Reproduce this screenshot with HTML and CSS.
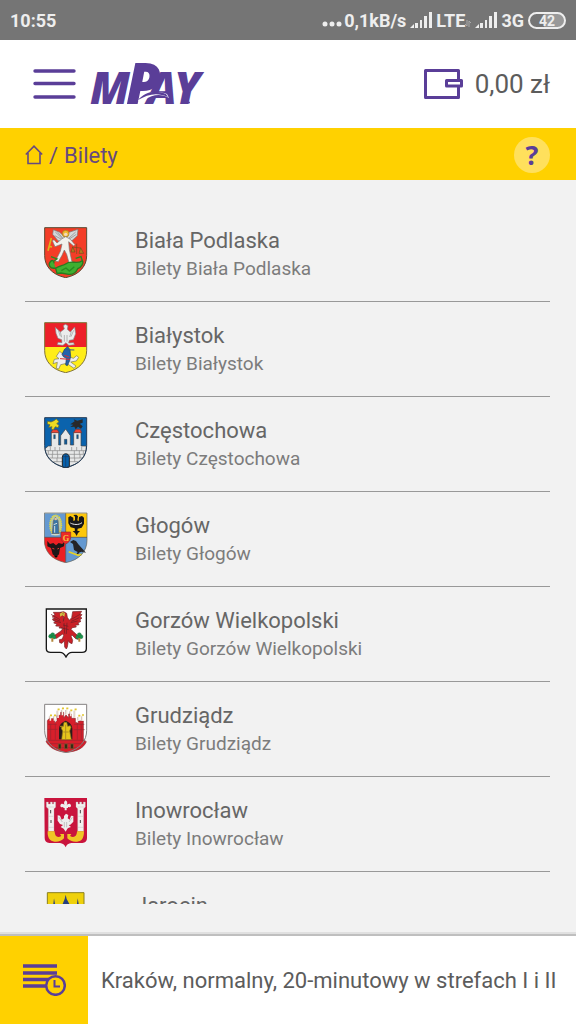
FILE: index.html
```html
<!DOCTYPE html>
<html lang="pl">
<head>
  <meta charset="UTF-8" />
  <meta name="viewport" content="width=device-width, initial-scale=1.0"/>
  <title>mPay - Bilety</title>
  <link rel="stylesheet" href="styles.css">
</head>
<body>

  <!-- Status bar -->
  <div class="status-bar">
    <span>10:55</span>
    <div class="status-info">
      <svg class="dots" width="20" height="6" viewBox="0 0 20 6" fill="#eee"><circle cx="3" cy="3" r="2.5"/><circle cx="10" cy="3" r="2.5"/><circle cx="17" cy="3" r="2.5"/></svg>
      <span>0,1kB/s</span>
      <svg class="signal" width="22" height="16" viewBox="0 0 22 16" fill="#eee"><path d="M0 16l4-4v4zM5 11h3v5H5zM10 8h2v8h-2zM14 4h3v12h-3zM19 0h3v16h-3z"/></svg>
      <span>LTE</span>
      <svg class="arrows" width="6" height="7" viewBox="0 0 6 7" fill="none" stroke="#aaa"><path d="M2 0v6L0 4M4 7V1l2 2"/></svg>
      <svg class="signal" width="22" height="16" viewBox="0 0 22 16" fill="#eee"><path d="M0 16l4-4v4zM5 11h3v5H5zM10 8h2v8h-2zM14 4h3v12h-3zM19 0h3v16h-3z"/></svg>
      <span>3G</span>
      <span class="battery">42</span>
    </div>
  </div>

  <!-- Header -->
  <header class="header">
    <button class="icon-btn" aria-label="Menu">
      <svg width="43" height="30" viewBox="0 0 43 30" stroke="#5a3e98" stroke-width="3.4" stroke-linecap="round"><path d="M2 2h39M2 14.500h39M2 28h39"/></svg>
    </button>
    <a href="#" class="logo" aria-label="mPay">
      <svg width="120" height="44" viewBox="0 0 120 44">
        <text class="logo-text" y="42" font-size="44"><tspan x="0">M</tspan><tspan x="36" font-size="56">P</tspan><tspan x="57">A</tspan><tspan x="84">Y</tspan></text>
        <path d="M48 39c5-7 15-12 29-7l2 4c-9-5-17-3-24 2z" fill="#fff"/>
        <path d="M48 38c6-7 16-11 28-6l2 3c-11-5-20-3-30 3z" fill="#5a3e98"/>
        <circle cx="99" cy="40.500" r="1" fill="#5a3e98"/>
      </svg>
    </a>
    <button class="wallet">
      <svg width="39" height="30" viewBox="0 0 39 30" fill="none" stroke="#5a3e98" stroke-width="3" stroke-linejoin="round"><path d="M34.500 11.500V1.500h-33v27h33V17"/><path d="M22.500 11.500h15v5.500h-15z"/></svg>
      <span>0,00 zł</span>
    </button>
  </header>

  <!-- Breadcrumb -->
  <nav class="breadcrumb">
    <a href="#" aria-label="Start"><svg width="18" height="20" viewBox="0 0 18 20" fill="none" stroke="#66497f" stroke-width="1.600"><path d="M.8 9.500L9 1.200l8.200 8.300M3 8v10.500h12V8"/></svg></a>
    <span>/</span>
    <a href="#">Bilety</a>
    <button class="help-btn">?</button>
  </nav>

  <!-- City list -->
  <main class="city-list">
    <a href="#" class="city">
      <svg class="crest" viewBox="41 36 132 153">
        <path d="M43 38h126v84c0 30-20 57-63 66c-43-9-63-36-63-66z" fill="#f43d27" stroke="#5b4a32" stroke-width="3"/>
        <path d="M100 82L83 77L67 58L69 44L88 52L102 65L116 52L143 43L141 62L126 76L112 80z" fill="#d5d8da" stroke="#777" stroke-width="2"/>
        <path d="M75 51l20 19M82 52l17 19M136 51l-20 18M138 58l-24 16M73 62l21 11" stroke="#858585" stroke-width="2"/>
        <circle cx="106" cy="56" r="10" fill="#f3ba32" stroke="#9b7626" stroke-width="2"/><circle cx="106" cy="58" r="5" fill="#f4d9bb"/>
        <path d="M94 72l12-7l14 8l14 16l-4 4l-15-13l2 23l7 34l5 8l-12 2l-8-29l-7-13l-7 16l-11 19l-9-2l15-29l5-22l-21 8l-8-18l5-3l9 10z" fill="#f2f2ed" stroke="#777" stroke-width="2"/>
        <path d="M53 107L63 69M57 94l8 2" stroke="#ddb51c" stroke-width="5"/>
        <path d="M125 96l25 3M139 86v31M127 96l-5 15h12zM151 98l-5 17h14z" fill="#b8791f" stroke="#72501c" stroke-width="2"/>
        <path d="M76 159c-18 4-24-11-15-20c5-5 11-2 10 6M76 160c12-9 22-7 31-14c16-12 31 4 49-9c5 7-3 20-14 24c-4 9-14 18-27 17l-23-4l-12 1z" fill="#3faf31" stroke="#287b20" stroke-width="4"/>
        <path d="M62 125l18 7l-10 6M136 130l16-5l4 13M93 167l14-8l10 9l15-13" fill="none" stroke="#288b21" stroke-width="4"/>
      </svg>
      <div class="city-text"><h2>Biała Podlaska</h2><p>Bilety Biała Podlaska</p></div>
    </a>
    <a href="#" class="city">
      <svg class="crest" viewBox="41 36 132 153">
        <path d="M43 38h126v84c0 30-20 57-63 66c-43-9-63-36-63-66z" fill="#ffed19"/>
        <path d="M43 38h126v73H43z" fill="#ed2028"/>
        <path d="M43 38h126v84c0 30-20 57-63 66c-43-9-63-36-63-66z" fill="none" stroke="#80723e" stroke-width="3"/>
        <path d="M102 57l-3-10l6-4l8 4l-2 11l9 8l13-15l3 20l-7 18l-12 2l-2 8l15-1l2 6l-17 2l-8-8l-9 8l-17-2l2-7l12 1l-1-9l-11-4l-6-15l-2-18l15 14z" fill="#eceded" stroke="#858585" stroke-width="2"/>
        <path d="M84 61l6 18M90 66l4 16M130 61l-8 19M123 65l-5 16M102 75v20M110 75v20" stroke="#969696" stroke-width="2"/>
        <path d="M78 139l10-15l12 10l29 11l10-8l6 5l-7 11l-17 3l16 12l-6 7l-22-15l-18 4l-6 13l-7-2l3-18l-13 4l4-13l14-2z" fill="#eee" stroke="#77755b" stroke-width="2"/>
        <path d="M95 133l8-16l9-7l7 9l2 20l-3 13l-7 15l-5-2l2-20l-9-5z" fill="#2362ab" stroke="#1e3f66" stroke-width="2"/><path d="M105 119l27 1" stroke="#315d83" stroke-width="3"/><path d="M89 146l30 2M102 136l15 5" stroke="#d92b31" stroke-width="3"/>
      </svg>
      <div class="city-text"><h2>Białystok</h2><p>Bilety Białystok</p></div>
    </a>
    <a href="#" class="city">
      <svg class="crest" viewBox="41 36 132 153">
        <path d="M43 38h126v84c0 30-20 57-63 66c-43-9-63-36-63-66z" fill="#0b63ad"/>
        <path d="M44 131l10-8h9V82h22v38h6V92l15-20l14 20v28h10V82h22v41h16c0 34-19 55-62 64c-36-8-60-27-62-56z" fill="#e7e8e8" stroke="#444" stroke-width="2"/>
        <path d="M46 137h121M49 148h114M56 159h99M68 170h75M60 126v11M74 126v11M88 126v11M124 126v11M139 126v11M154 126v11M54 137v11M67 137v11M81 137v11M132 137v11M147 137v11M159 137v11M66 148v11M82 148v11M132 148v11M149 148v11M80 159v11M133 159v11" stroke="#858585" stroke-width="2"/>
        <path d="M62 83l5-9h14l5 9zM130 83l6-10h14l4 10z" fill="#f04435" stroke="#713b37" stroke-width="2"/>
        <path d="M70 89h5v12h-5zM139 89h5v12h-5zM102 103h8v15h-8z" fill="#145a94" stroke="#333"/>
        <path d="M96 186v-29c0-14 21-14 21 0v29l-11 2z" fill="#0560ab" stroke="#222" stroke-width="3"/><path d="M97 155h19M106 150v36" stroke="#193a60" stroke-width="2"/>
        <path d="M52 49l10 2l9-4l7-5l8 8l-7 6l7 5l-3 7l-8-3l-6 9l-6-2l2-7l-10 2l4-8l-8-2z" fill="#eddb22" stroke="#746b20" stroke-width="2"/>
        <path d="M120 58l13-9l-3-6l11 4l16-4v10l-9 3l9 8l-5 7l-9-6l-7 8l-4-8l-12 1l9-7z" fill="#29292b"/>
        <path d="M43 38h126v84c0 30-20 57-63 66c-43-9-63-36-63-66z" fill="none" stroke="#253d58" stroke-width="3"/>
      </svg>
      <div class="city-text"><h2>Częstochowa</h2><p>Bilety Częstochowa</p></div>
    </a>
    <a href="#" class="city">
      <svg class="crest" viewBox="41 36 132 153">
        <path d="M42 40h64v72H42z" fill="#6499d1"/><path d="M106 40h64v72h-64z" fill="#fdc70c"/>
        <path d="M42 112h64v76c-44-8-64-35-64-67z" fill="#ec2024"/><path d="M106 112h64v10c0 31-21 58-64 66z" fill="#6499d1"/>
        <ellipse cx="76" cy="75" rx="17" ry="29" fill="#b3c8ac" stroke="#e6d93a" stroke-width="5" stroke-dasharray="4 2"/>
        <path d="M69 63l6-11l8 10l3 39H66z" fill="#3975a6" stroke="#665e61" stroke-width="2"/><circle cx="76" cy="57" r="4" fill="#ddc5a3"/><path d="M70 74l10-4M73 78v20M63 104h25" stroke="#d5dfdf" stroke-width="3"/>
        <path d="M134 50l-5-5l9-1l5 5l-2 12l4 3l1-13l9-3l6 5v18l-7 12l-12 3l-1 6l8 2l-6 5l-4 9l-5-9l-7-5l7-2l-1-7l-12-3l-7-12V52l6-4l9 5v10l5-2z" fill="#171719"/><path d="M120 69c8 5 26 7 35-1" fill="none" stroke="#eee" stroke-width="3"/>
        <path d="M51 123l8 9l10-3l8 7l8-7l11 3l7-10l-2 17l-12 5l-3 19l-9 9l-10-9l-5-19l-11-5z" fill="#1d1718"/><path d="M66 145l6 2M81 147l5-2" stroke="#e13c34" stroke-width="3"/><path d="M70 168l7 7l7-7" stroke="#e13c34" stroke-width="2"/>
        <path d="M119 126l10-6l8 3l7 10l23 25l-13-3l-6 2l-7 8l-3-2l4-7l-11-6l-3-18z" fill="#222327"/><path d="M115 155l16 6l13 5l10-3" fill="none" stroke="#e8d225" stroke-width="5"/>
        <path d="M92 96h29v16c0 9-6 16-15 20c-9-4-14-11-14-20z" fill="#ee2927" stroke="#8d3028" stroke-width="2"/>
        <text class="crest-letter" x="97" y="122">G</text>
        <path d="M42 39h128v82c0 32-22 59-64 67c-43-9-64-35-64-67z" fill="none" stroke="#666455" stroke-width="2"/><path d="M106 40v56M43 112h49M121 112h49M106 132v55" stroke="#444" stroke-width="2"/>
      </svg>
      <div class="city-text"><h2>Głogów</h2><p>Bilety Głogów</p></div>
    </a>
    <a href="#" class="city">
      <svg class="crest" viewBox="41 36 132 153">
        <path d="M48 42h120v119q0 11-13 11h-30q-11 0-18 14q-7-14-18-14H61q-13 0-13-11z" fill="#fff" stroke="#181818" stroke-width="4"/>
        <path d="M99 79l2-12l-5-6l-8-2l3-7l9-2l9 5l2 12l6 9l7-8l3-18l27-1l-5 8l6 2l-6 7l6 3l-7 6l4 4l-9 5l3 5l-11 2l3 5l-12 2l-4 5l9 9l17 15l-4 6l-8-2l-11-11l-3 3l5 13l-2 10l-7-3l-4-6l-3 19l-3 6l-5-6l-1-19l-7 8l-7-2l-1-9l9-2l4-11l-3-4l-18 13l-8-2l2-7l19-13l6-8l-12-1l3-5l-13-1l4-6l-10-3l5-5l-9-5l7-4l-7-7l8-3l-5-8h29l2 19z" fill="#ca2027" stroke="#742428" stroke-width="2"/>
        <path d="M62 58l27 16M65 68l25 11M69 77l23 6M149 58l-26 15M147 68l-24 11M142 78l-21 5M101 84l2 32M110 83l-2 34M92 98l23 6M98 90l16 4" stroke="#6b2026" stroke-width="2"/>
        <path d="M88 56l9-5l7 4l-2 10l-6-4l-6 4z" fill="#d7bf43"/><circle cx="98" cy="56" r="1.500" fill="#333"/>
        <g fill="#19944c" stroke="#235c34"><circle cx="61" cy="124" r="6"/><circle cx="67" cy="119" r="6"/><circle cx="71" cy="126" r="6"/><circle cx="142" cy="126" r="6"/><circle cx="147" cy="119" r="6"/><circle cx="152" cy="125" r="6"/></g><path d="M66 129v11M147 129v11" stroke="#b4883c" stroke-width="6"/>
      </svg>
      <div class="city-text"><h2>Gorzów Wielkopolski</h2><p>Bilety Gorzów Wielkopolski</p></div>
    </a>
    <a href="#" class="city">
      <svg class="crest" viewBox="41 36 132 153">
        <path d="M43 42h126v79c0 30-19 57-62 67c-44-10-64-37-64-67z" fill="#fff"/>
        <path d="M51 151V92l5-6h17v13l7-7V76h11v-9h9v17l7-9l8 9V72h8v13h12v12l9 3V93h15v58l9 4c-8 18-24 29-61 32c-31-3-51-15-60-33z" fill="#d71f2b" stroke="#902b30" stroke-width="2"/>
        <path d="M86 148v-31c0-12 8-20 20-25c12 5 20 13 20 25v31z" fill="#2a1b19"/>
        <path d="M94 149l3-26l-5-10l7-4l2-12h8l3 12l8-2l2 5l-4 11l5 26z" fill="#e6c61c" stroke="#8b741e" stroke-width="2"/><path d="M89 109h10M106 104v43M99 126h16" stroke="#b08f20" stroke-width="3"/>
        <path d="M60 92V75M72 92V75M83 84V56M96 76V54M109 75V54M121 79V59M134 84V56M145 92V76M156 92V74" stroke="#f8f0e4" stroke-width="5"/>
        <path d="M57 91V79M69 91V79M80 83V62M93 75V60M106 74V60M118 78V64M131 83V62M142 91V81M153 91V79" stroke="#6d4b41" stroke-width="1"/>
        <path d="M59 76h6M71 76h6M82 58h6M95 55h6M108 55h6M120 61h6M133 58h6M144 77h6M155 75h6" stroke="#e2c732" stroke-width="5"/>
        <path d="M53 103h26M52 118h29M131 103h31M130 119h33M49 151h116M54 161h105M64 173h85M61 101v48M75 101v48M141 101v48M153 101v48" stroke="#992531" stroke-width="2"/>
        <path d="M84 162h8v14h-8zM103 162h8v14h-8zM121 162h8v14h-8z" fill="#302317" stroke="#77662b" stroke-width="2"/>
        <path d="M43 43h126v78c0 30-19 57-62 67c-44-10-64-37-64-67z" fill="none" stroke="#858282" stroke-width="3"/>
      </svg>
      <div class="city-text"><h2>Grudziądz</h2><p>Bilety Grudziądz</p></div>
    </a>
    <a href="#" class="city">
      <svg class="crest" viewBox="41 36 132 153">
        <path d="M42 39h128v120q0 14-14 15h-33q-13 1-17 13q-5-12-17-13H57q-14-1-14-15z" fill="#c9143d"/>
        <path d="M48 51h6v6h6v-6h6v6h4v-6h6v16l-5 4v68H54V71l-6-5zM137 51h6v6h5v-6h6v6h5v-6h6v15l-5 5v68h-18V71l-5-5z" fill="#f3f1ef" stroke="#aaa" stroke-width="1"/>
        <path d="M61 75v10M150 75v10M62 105v9M150 105v9" stroke="#444" stroke-width="3"/><path d="M52 66h20M141 66h20M55 94h14M144 94h14M54 127h16M143 127h16" stroke="#aaa" stroke-width="1"/>
        <path d="M52 139h21c0 14 8 22 20 14l-4-6h12v13c-11 12-30 14-42 4q-8-7-7-25zM161 139h-21c0 14-9 22-21 14l4-6h-12v13c11 12 31 14 43 4q7-7 7-25z" fill="#efc625"/>
        <path d="M101 93l6-7l7 4l-2 10l6 4l4-12l7 1v17l-9 9l-5 1l7 6l-7 2l-4 3l-5 9l-6-9l-9-5l7-6l-9-3l-7-10V91l7 1l5 12l7-4z" fill="#eee"/><path d="M86 97l10 14M126 97l-10 14M102 111v16M109 111v16" stroke="#aaa" stroke-width="2"/>
        <path d="M106 46c7 5 5 12 2 17c3-8 13-9 14-1c0 5-7 5-9 4v3h-4v7h-6v-7h-4v-3c-3 1-9 1-9-4c1-8 11-7 14 1c-3-5-5-12 2-17z" fill="#eee"/>
      </svg>
      <div class="city-text"><h2>Inowrocław</h2><p>Bilety Inowrocław</p></div>
    </a>
    <a href="#" class="city">
      <svg class="crest" viewBox="41 36 132 153">
        <path d="M51 38h110v84c0 30-18 50-55 62c-37-12-55-32-55-62z" fill="#efd10b" stroke="#8b801e" stroke-width="3"/>
        <path d="M106 44l3 13l12 22v65H94V79l9-22zM71 55l3 16l9 14v59H62V85l7-14zM142 55l3 16l8 14v59h-22V85l9-14z" fill="#274080"/>
      </svg>
      <div class="city-text"><h2>Jarocin</h2><p>Bilety Jarocin</p></div>
    </a>
  </main>

  <!-- Last ticket -->
  <footer class="last-ticket">
    <button class="history-btn" aria-label="Historia">
      <svg width="43" height="32" viewBox="0 0 43 32" fill="none" stroke="#5a3e98"><path d="M0 2h34M0 9h34M0 15.500h26M0 22h23" stroke-width="3.400"/><circle cx="32.500" cy="21.500" r="9.300" fill="#ffd100" stroke-width="2.500"/><path d="M31.500 16v6.500H37" stroke-width="2"/></svg>
    </button>
    <a href="#">Kraków, normalny, 20-minutowy w strefach I i II</a>
  </footer>

</body>
</html>
```

FILE: styles.css
```css
* {
  box-sizing: border-box;
}

body {
  font-family: Roboto, Arial, sans-serif;
  margin: 0;
  height: 100vh;
  background-color: #f2f2f2;
  display: flex;
  flex-direction: column;
  overflow: hidden;
}

a {
  color: inherit;
  text-decoration: none;
}

button {
  font-family: inherit;
  border: none;
  padding: 0;
  background: none;
  cursor: pointer;
}

svg {
  display: block;
  flex-shrink: 0;
}

/* Status bar */
.status-bar {
  display: flex;
  justify-content: space-between;
  align-items: center;
  height: 40px;
  flex-shrink: 0;
  padding: 0 10px;
  background-color: #757575;
  color: #eee;
  font-size: 18px;
  font-weight: bold;
}

.status-info {
  display: flex;
  align-items: center;
  gap: 4px;
}

.dots {
  margin-top: 8px;
  margin-right: -2px;
}

.arrows {
  margin-top: 6px;
  margin-left: -4px;
}

.battery {
  width: 38px;
  height: 17px;
  border: 2px solid #eee;
  border-radius: 9px;
  background: linear-gradient(to right, #757575 14px, #999 14px);
  font-size: 14px;
  line-height: 14px;
  text-align: center;
}

/* Header */
.header {
  display: flex;
  align-items: center;
  height: 88px;
  flex-shrink: 0;
  padding: 0 26px 0 33px;
  background-color: #fff;
}

.logo {
  margin-left: 14px;
}

.logo-text {
  font-family: "Open Sans", sans-serif;
  font-weight: 800;
  font-style: italic;
  fill: #5a3e98;
}

.wallet {
  display: flex;
  align-items: center;
  gap: 12px;
  margin-left: auto;
  color: #5c5c5c;
  font-size: 26px;
}

/* Breadcrumb */
.breadcrumb {
  display: flex;
  align-items: center;
  gap: 6px;
  height: 52px;
  flex-shrink: 0;
  padding: 2px 26px 0 25px;
  background-color: #ffd100;
  color: #66497f;
  font-size: 22px;
}

.help-btn {
  width: 36px;
  height: 36px;
  margin-left: auto;
  border-radius: 50%;
  background-color: #ffe05c;
  color: #5a3e98;
  font-family: "Open Sans", sans-serif;
  font-size: 27px;
  font-weight: bold;
  line-height: 36px;
}

/* City list */
.city-list {
  flex: 1;
  min-height: 0;
  margin: 27px 26px 30px 25px;
  overflow: hidden;
}

.city {
  display: flex;
  gap: 47px;
  height: 95px;
  padding: 20px 19px 0;
  border-bottom: 1px solid #999;
}

.crest {
  width: 44px;
  height: 51px;
}

.crest-letter {
  font-family: "Liberation Serif", serif;
  font-size: 25px;
  font-weight: bold;
  fill: #f2c443;
}

.city-text h2,
.city-text p {
  margin: 0;
  font-weight: normal;
  line-height: 28px;
}

.city-text h2 {
  color: #666;
  font-size: 22px;
}

.city-text p {
  color: #7c7c7c;
  font-size: 19px;
}

/* Last ticket */
.last-ticket {
  display: flex;
  align-items: center;
  flex-shrink: 0;
  gap: 13px;
  border-top: 2px solid #bfbfbf;
  box-shadow: 0 -2px 0 #e0e0e0;
  background-color: #fff;
  color: #5c5c5c;
  font-size: 22px;
  white-space: nowrap;
}

.history-btn {
  display: flex;
  align-items: center;
  justify-content: center;
  width: 88px;
  height: 88px;
  flex-shrink: 0;
  background-color: #ffd100;
}
```
